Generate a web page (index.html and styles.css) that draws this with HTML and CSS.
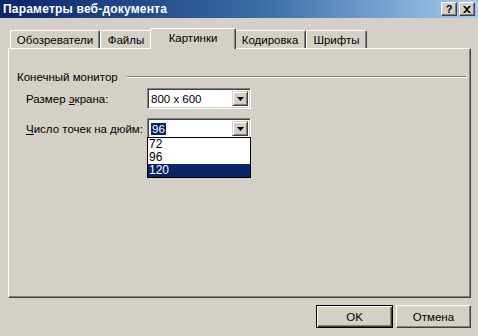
FILE: index.html
```html
<!DOCTYPE html>
<html lang="ru">
<head>
<meta charset="utf-8">
<title>Параметры веб-документа</title>
<link rel="stylesheet" href="styles.css">
</head>
<body>
<div class="dialog">
  <div class="titlebar">
    <span class="title">Параметры веб-документа</span>
    <div class="caption-buttons">
      <span class="cap-btn help">?</span>
      <span class="cap-btn close">
        <svg width="8" height="7" viewBox="0 0 8 7"><path d="M0 0h2l2 2 2-2h2L5 3.5 8 7H6L4 5 2 7H0l3-3.5z" fill="#000"/></svg>
      </span>
    </div>
  </div>

  <div class="tabs">
    <div class="tab t1">Обозреватели</div>
    <div class="tab t2">Файлы</div>
    <div class="tab t3 active">Картинки</div>
    <div class="tab t4">Кодировка</div>
    <div class="tab t5">Шрифты</div>
  </div>

  <div class="page">
    <div class="group-head">
      <span class="group-label">Конечный монитор</span>
      <span class="group-line"></span>
    </div>
    <div class="form">
      <label class="field-label">Размер <u>э</u>крана:</label>
      <div class="combo">
        <span class="combo-text">800 x 600</span>
        <span class="combo-btn"><svg width="7" height="4" viewBox="0 0 7 4"><path d="M0 0h7L3.5 4z" fill="#000"/></svg></span>
      </div>
      <label class="field-label"><u>Ч</u>исло точек на дюйм:</label>
      <div class="combo open">
        <span class="combo-text"><span class="sel">96</span></span>
        <span class="combo-btn"><svg width="7" height="4" viewBox="0 0 7 4"><path d="M0 0h7L3.5 4z" fill="#000"/></svg></span>
        <ul class="dropdown">
          <li>72</li>
          <li>96</li>
          <li class="hl">120</li>
        </ul>
      </div>
    </div>
  </div>

  <div class="footer">
    <button class="btn default">OK</button>
    <button class="btn">Отмена</button>
  </div>
</div>
</body>
</html>
```

FILE: styles.css
```css
* { box-sizing: border-box; }
html, body { margin: 0; padding: 0; }
body {
  width: 478px;
  height: 336px;
  background: #d4d0c8;
  font-family: "Liberation Sans", Arial, sans-serif;
  font-size: 11.5px;
  color: #000;
  overflow: hidden;
}
.dialog { width: 478px; height: 336px; }

.titlebar {
  height: 18px;
  background: linear-gradient(to right, #0a246a 0%, #3a6ea5 55%, #a6caf0 100%);
  display: flex;
  align-items: center;
  justify-content: space-between;
  padding-left: 3px;
  padding-right: 3px;
}
.title {
  color: #fff;
  font-weight: bold;
  font-size: 12px;
  letter-spacing: 0.2px;
}
.caption-buttons { display: flex; gap: 2px; }
.cap-btn {
  width: 16px;
  height: 14px;
  background: #d4d0c8;
  border-top: 1px solid #fff;
  border-left: 1px solid #fff;
  border-right: 1px solid #404040;
  border-bottom: 1px solid #404040;
  box-shadow: inset -1px -1px 0 #808080;
  display: flex;
  align-items: center;
  justify-content: center;
  font-weight: bold;
  font-size: 11px;
  line-height: 1;
}

.tabs {
  display: flex;
  align-items: flex-end;
  height: 20px;
  margin-top: 10px;
  padding-left: 10px;
  position: relative;
  z-index: 1;
}
.tab {
  height: 18px;
  padding: 0 4px;
  display: flex;
  align-items: center;
  justify-content: center;
  border-top: 1px solid #fff;
  border-left: 1px solid #fff;
  border-right: 1px solid #404040;
  box-shadow: inset -1px 0 0 #808080;
  border-radius: 2px 2px 0 0;
  background: #d4d0c8;
  white-space: nowrap;
}
.t1 { width: 90px; }
.t2 { width: 52px; }
.t3 { width: 86px; }
.t4 { width: 72px; }
.t5 { width: 61px; }
.tab.active {
  height: 21px;
  margin: 0 -2px -1px -2px;
  padding-bottom: 3px;
  position: relative;
  z-index: 2;
}

.page {
  margin-left: 8px;
  width: 463px;
  height: 250px;
  border-top: 1px solid #fff;
  border-left: 1px solid #fff;
  border-right: 1px solid #404040;
  border-bottom: 1px solid #404040;
  box-shadow: inset -1px -1px 0 #808080;
  padding: 21px 4px 0 8px;
}
.group-head {
  display: flex;
  align-items: center;
  height: 13px;
}
.group-line {
  flex: 1;
  margin-left: 9px;
  height: 2px;
  border-top: 1px solid #808080;
  border-bottom: 1px solid #fff;
}
.form {
  margin-top: 5px;
  padding-left: 9px;
  display: grid;
  grid-template-columns: 121px 104px;
  row-gap: 9px;
  align-items: center;
}
.field-label { white-space: nowrap; }
.combo {
  position: relative;
  height: 21px;
  background: #fff;
  border-top: 1px solid #808080;
  border-left: 1px solid #808080;
  border-right: 1px solid #fff;
  border-bottom: 1px solid #fff;
  box-shadow: inset 1px 1px 0 #404040, inset -1px -1px 0 #d4d0c8;
  display: flex;
  align-items: center;
  padding: 2px;
}
.combo-text { flex: 1; padding-left: 1px; }
.sel { background: #0a246a; color: #fff; padding: 0 1px; }
.combo-btn {
  width: 16px;
  height: 15px;
  background: #d4d0c8;
  border-top: 1px solid #d4d0c8;
  border-left: 1px solid #d4d0c8;
  border-right: 1px solid #404040;
  border-bottom: 1px solid #404040;
  box-shadow: inset 1px 1px 0 #fff, inset -1px -1px 0 #808080;
  display: flex;
  align-items: center;
  justify-content: center;
}
.dropdown {
  position: absolute;
  left: -1px;
  right: -1px;
  top: 18px;
  margin: 0;
  padding: 0;
  list-style: none;
  background: #fff;
  border: 1px solid #000;
}
.dropdown li {
  height: 13px;
  line-height: 13px;
  padding-left: 1px;
  font-size: 12px;
}
.dropdown li.hl { background: #0a246a; color: #fff; }

.footer {
  display: flex;
  justify-content: flex-end;
  gap: 3px;
  margin-top: 7px;
  padding-right: 7px;
}
.btn {
  font: inherit;
  color: #000;
  width: 75px;
  height: 23px;
  background: #d4d0c8;
  border-top: 1px solid #fff;
  border-left: 1px solid #fff;
  border-right: 1px solid #404040;
  border-bottom: 1px solid #404040;
  box-shadow: inset -1px -1px 0 #808080;
  padding: 0;
}
.btn.default {
  width: 77px;
  border: 1px solid #000;
  box-shadow: inset 1px 1px 0 #fff, inset -1px -1px 0 #404040, inset -2px -2px 0 #808080;
}
```
